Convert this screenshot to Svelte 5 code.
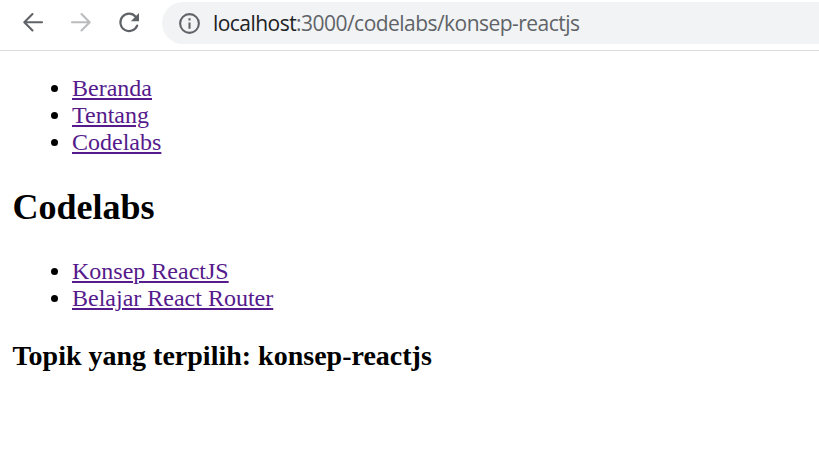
<script>
  const pages = ['Beranda', 'Tentang', 'Codelabs'];
  const topics = ['Konsep ReactJS', 'Belajar React Router'];
</script>

<div class="browser">
  <header class="toolbar">
    <div class="nav">
      <svg class="icon" viewBox="0 0 26 26"><path d="M22 12.2H4.5M12.5 4L4.3 12.2l8.2 8.2" /></svg>
      <svg class="icon muted" viewBox="0 0 26 26"><path d="M4 12.2h17.5M13.5 4l8.2 8.2-8.2 8.2" /></svg>
      <svg class="icon" viewBox="0 0 26 26"><path d="M19.7 6.7A8.7 8.7 0 1 0 21.2 15.5" /><path class="tip" d="M23 3v8.2h-8.2z" /></svg>
    </div>
    <div class="address">
      <svg class="info" viewBox="0 0 24 24"><path d="M11 17h2v-6h-2zm1-15a10 10 0 1 0 0 20 10 10 0 0 0 0-20zm0 18a8 8 0 1 1 0-16 8 8 0 0 1 0 16zM11 9h2V7h-2z" /></svg>
      <span class="url"><b>localhost</b>:3000/codelabs/konsep-reactjs</span>
    </div>
  </header>
  <main>
    <ul class="pages">
      {#each pages as page}<li><a href="#top">{page}</a></li>{/each}
    </ul>
    <h2>Codelabs</h2>
    <ul class="topics">
      {#each topics as topic}<li><a href="#top">{topic}</a></li>{/each}
    </ul>
    <h3>Topik yang terpilih: konsep-reactjs</h3>
  </main>
</div>

<style>
  .browser { height: 463px; background: #fff; overflow: hidden; }
  .toolbar { box-sizing: border-box; height: 51px; padding-top: 2px; display: flex; border-bottom: 1px solid #dadce0; }
  .nav { width: 162px; height: 42px; box-sizing: border-box; padding-left: 20px; display: flex; align-items: center; gap: 22px; flex: none; }
  .icon { width: 26px; height: 26px; fill: none; stroke: #5f6368; stroke-width: 2.1; stroke-linecap: round; stroke-linejoin: round; }
  .tip { fill: #5f6368; stroke: none; }
  .muted { stroke: #babcbe; }
  .address { flex: 1; height: 42px; box-sizing: border-box; padding-left: 15px; border-radius: 21px 0 0 21px; background: #f1f3f4; display: flex; align-items: center; }
  .info { width: 25px; height: 25px; fill: #5f6368; flex: none; }
  .url { margin-left: 11px; font: 21px/30px "Open Sans", sans-serif; letter-spacing: -0.54px; color: #5f6368; white-space: nowrap; }
  .url b { font-weight: 400; color: #202124; }
  main { padding: 24px 12px 0; font: 24px/27px "Liberation Serif", serif; color: #000; }
  ul { margin: 0; padding-left: 60px; }
  a { color: #551a8b; text-decoration-thickness: 2px; text-underline-offset: 2px; }
  h2 { margin: 31px 0 30px; padding-left: 0.4px; font-size: 36px; line-height: 41px; }
  h3 { margin: 28px 0 0; padding-left: 0.5px; font-size: 28px; line-height: 32px; }
</style>
